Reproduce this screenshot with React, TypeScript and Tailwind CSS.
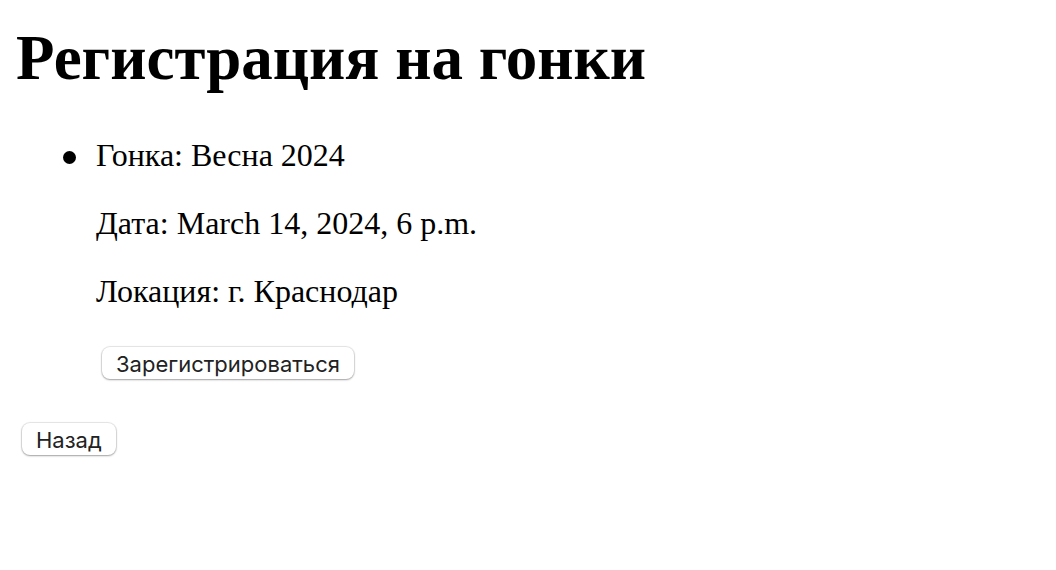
import React from "react";

type Race = { name: string; date: string; location: string };

const races: Race[] = [
  { name: "Весна 2024", date: "March 14, 2024, 6 p.m.", location: "г. Краснодар" },
];

function Button({ children }: { children: React.ReactNode }) {
  return (
    <button
      type="button"
      className="h-8 rounded-lg bg-white px-3.5 pt-0.5 font-['Inter','Liberation_Sans',sans-serif] text-[22px] leading-[30px] text-[#222222] shadow-[0_0_1px_1px_rgba(0,0,0,0.1),0_1px_2px_rgba(0,0,0,0.3)]"
    >
      {children}
    </button>
  );
}

export default function App() {
  return (
    <main className="bg-white px-4 pt-[22px] pb-8 font-['Liberation_Serif',serif] text-[32px] leading-9 text-black">
      <h1 className="text-[63px] leading-[72px] font-bold">Регистрация на гонки</h1>
      <ul className="mt-[43px] pl-[47px]">
        {races.map((race) => (
          <li
            key={race.name}
            className="flex gap-5 before:mt-3.5 before:size-[13px] before:shrink-0 before:rounded-full before:bg-black before:content-['']"
          >
            <div className="flex flex-col items-start gap-8">
              <p>Гонка: {race.name}</p>
              <p>Дата: {race.date}</p>
              <p>Локация: {race.location}</p>
              <div className="mt-1.5 flex px-1.5">
                <Button>Зарегистрироваться</Button>
              </div>
            </div>
          </li>
        ))}
      </ul>
      <div className="mt-11 flex px-1.5">
        <Button>Назад</Button>
      </div>
    </main>
  );
}
